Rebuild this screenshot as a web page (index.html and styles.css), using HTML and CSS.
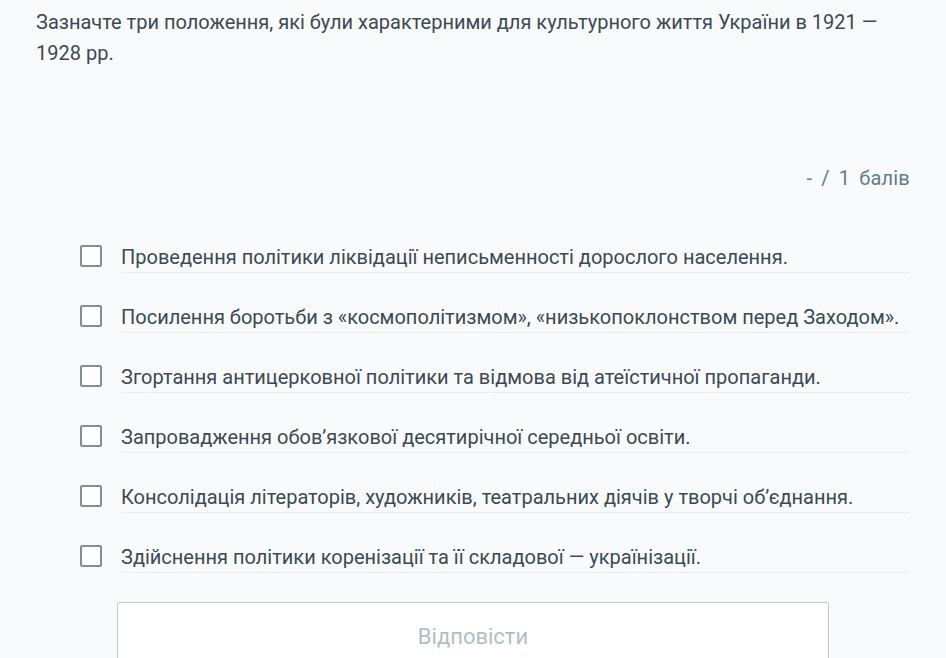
FILE: index.html
```html
<!DOCTYPE html>
<html lang="uk">
<head>
<meta charset="utf-8">
<link rel="stylesheet" href="styles.css">
</head>
<body>
<div class="page">
  <p class="question">Зазначте три положення, які були характерними для культурного життя України в 1921 — 1928 рр.</p>
  <div class="score"><span>-</span><span>/</span><span>1</span><span>балів</span></div>
  <ul class="options">
    <li class="option"><span class="box"></span><span class="label">Проведення політики ліквідації неписьменності дорослого населення.</span></li>
    <li class="option"><span class="box"></span><span class="label">Посилення боротьби з «космополітизмом», «низькопоклонством перед Заходом».</span></li>
    <li class="option"><span class="box"></span><span class="label">Згортання антицерковної політики та відмова від атеїстичної пропаганди.</span></li>
    <li class="option"><span class="box"></span><span class="label">Запровадження обов’язкової десятирічної середньої освіти.</span></li>
    <li class="option"><span class="box"></span><span class="label">Консолідація літераторів, художників, театральних діячів у творчі об’єднання.</span></li>
    <li class="option"><span class="box"></span><span class="label">Здійснення політики коренізації та її складової — українізації.</span></li>
  </ul>
  <div class="actions"><button class="submit">Відповісти</button></div>
</div>
</body>
</html>
```

FILE: styles.css
```css
html, body {
  margin: 0;
  padding: 0;
  background: #f9fafc;
  overflow: hidden;
}
body {
  font-family: Roboto, "Noto Sans", sans-serif;
  color: #3b4a52;
}
.page {
  padding: 7px 36px 0 36px;
}
.question {
  margin: 0;
  font-size: 20px;
  line-height: 31px;
  color: #3b4a52;
}
.score {
  display: flex;
  justify-content: flex-end;
  gap: 9px;
  margin-top: 97px;
  font-size: 20px;
  line-height: 24px;
  color: #607d8b;
  letter-spacing: 0.2px;
}
.options {
  list-style: none;
  margin: 37px 0 0 0;
  padding: 0 0 0 44px;
}
.option {
  display: flex;
  align-items: center;
  gap: 19px;
  height: 60px;
}
.box {
  flex: none;
  width: 18px;
  height: 18px;
  border: 2px solid #80909a;
  border-radius: 2px;
  background: #fff;
  margin-bottom: 2px;
}
.label {
  flex: 1;
  font-size: 20px;
  line-height: 30px;
  color: #3b4a52;
  border-bottom: 1px solid #eceff1;
  padding-bottom: 0;
}
.actions {
  padding: 0 81px 0 81px;
  margin-top: 15px;
}
.submit {
  display: block;
  width: 100%;
  height: 70px;
  background: #fff;
  border: 1px solid #c4c7c9;
  border-radius: 2px;
  font-family: Roboto, "Noto Sans", sans-serif;
  font-size: 22px;
  color: #b0bec5;
  padding: 0 0 2px 0;
}
```
